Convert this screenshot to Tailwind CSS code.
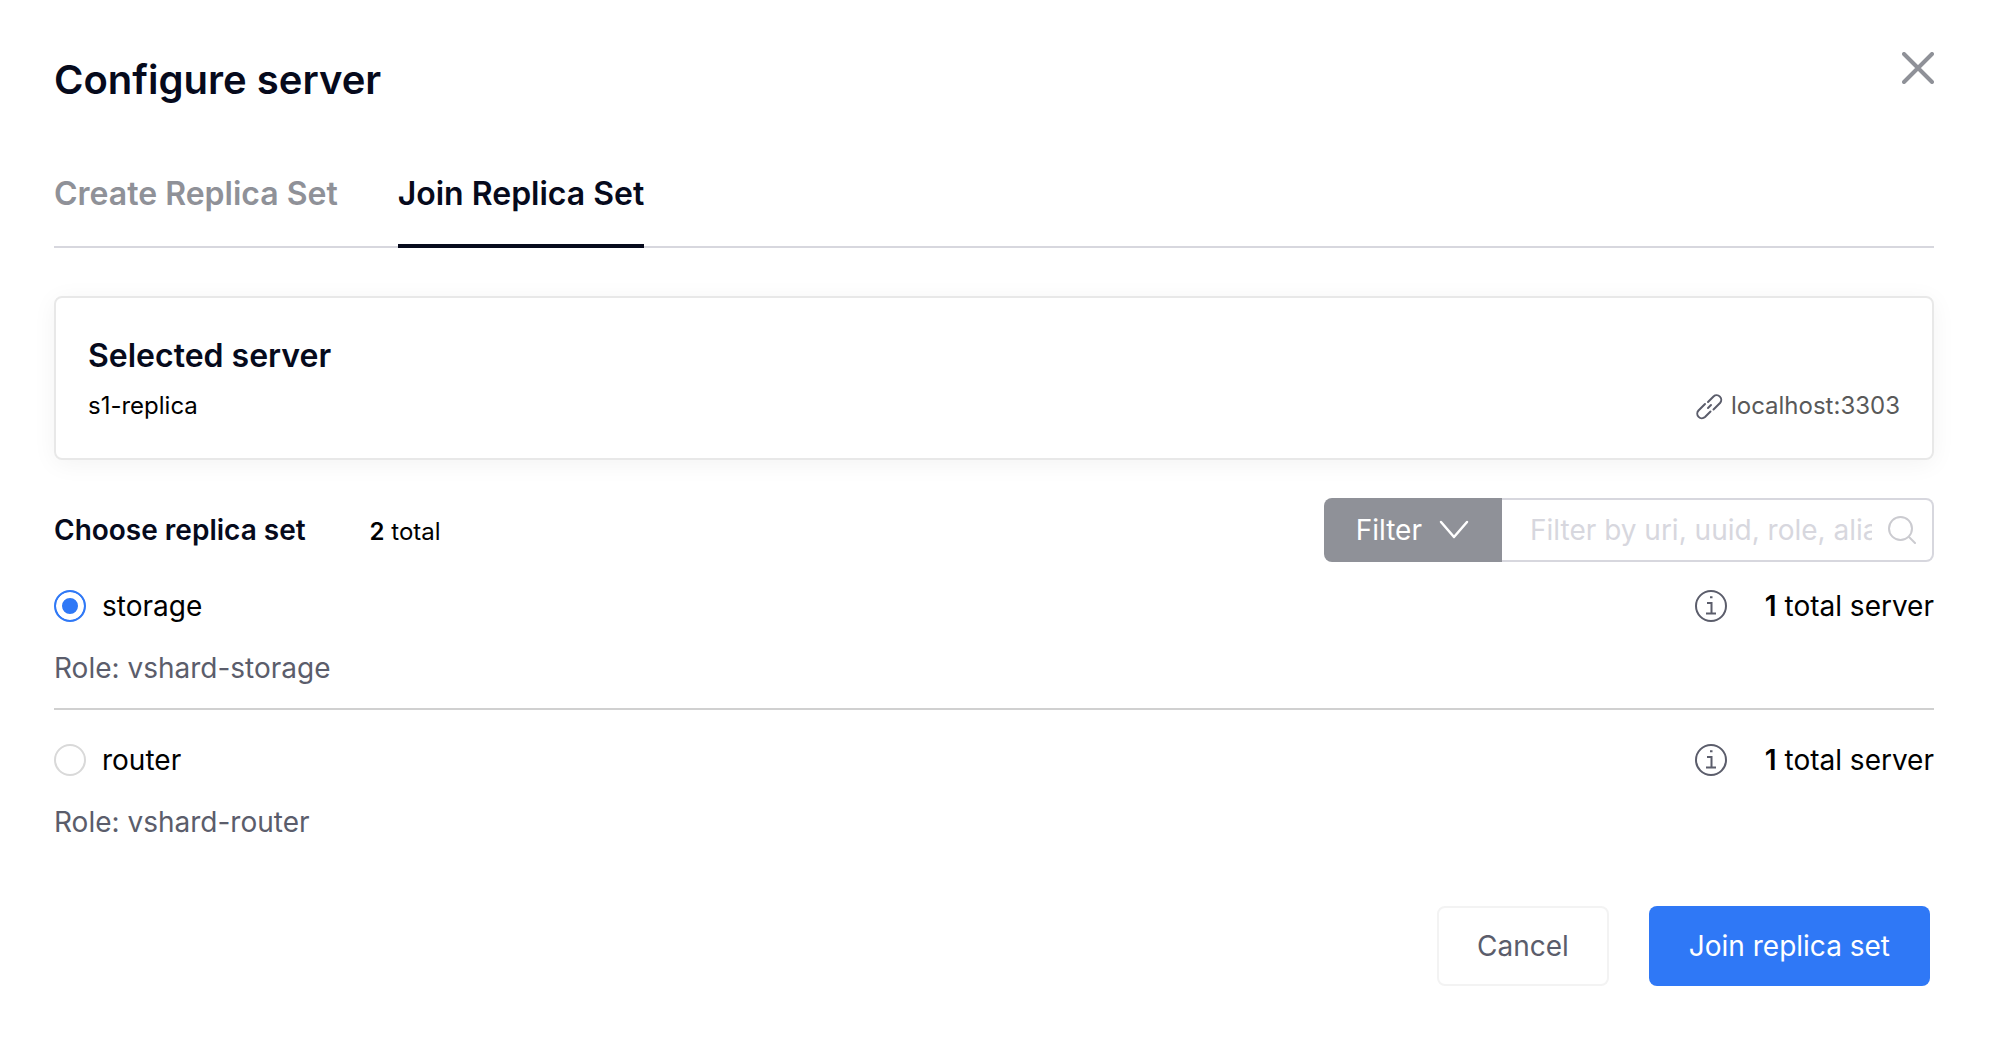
<!DOCTYPE html>
<html lang="en">
<head>
  <meta charset="UTF-8" />
  <meta name="viewport" content="width=device-width, initial-scale=1.0"/>
  <title>Configure server</title>
  <script src="https://cdn.jsdelivr.net/npm/@tailwindcss/browser@4"></script>
</head>
<body class="bg-white font-['Inter',sans-serif] text-[28px] leading-10 text-black">
  <main class="pl-[54px] pr-14 py-14">
    <!-- Header -->
    <header class="flex justify-between items-start">
      <h1 class="text-[40px] leading-12 font-semibold text-[#060a1c]">Configure server</h1>
      <button type="button" aria-label="Close" class="-mt-1 text-[#8f9198]">
        <svg class="size-8" viewBox="0 0 32 32" fill="none" stroke="currentColor" stroke-width="4" stroke-linecap="round">
          <path d="M2 2l28 28M30 2L2 30"/>
        </svg>
      </button>
    </header>

    <!-- Tabs -->
    <nav class="mt-[66px] flex gap-[60px] border-b-2 border-[#d7d7de] text-[32px] leading-12 font-semibold">
      <button type="button" class="-mb-0.5 pb-[26px] border-b-4 border-transparent text-[#8f9198]">Create Replica Set</button>
      <button type="button" class="-mb-0.5 pb-[26px] border-b-4 border-[#060a1c] text-[#060a1c]">Join Replica Set</button>
    </nav>

    <!-- Selected server -->
    <section class="mt-12 px-8 pt-[34px] pb-8 border-2 border-[#e8e8e8] rounded-lg shadow-[0_4px_24px_rgba(0,0,0,0.05)]">
      <h2 class="text-[32px] leading-12 font-semibold text-[#060a1c]">Selected server</h2>
      <div class="mt-1.5 flex justify-between text-2xl leading-10">
        <span>s1-replica</span>
        <span class="flex items-center gap-2 text-[#595959]">
          <svg class="size-7" viewBox="0 0 28 28" fill="none" stroke="#5b5d6b" stroke-width="2" stroke-linecap="round" stroke-linejoin="round">
            <path d="M13 10l5.500-5.500a4.600 4.600 0 0 1 6.500 6.500l-6.500 6.500"/>
            <path d="M10 12l-6.500 6.500a4.600 4.600 0 0 0 6.500 6.500l5.500-5.500"/>
            <path d="M13 16l3-3"/>
          </svg>
          localhost:3303
        </span>
      </div>
    </section>

    <!-- Replica set list header -->
    <div class="mt-[38px] flex justify-between items-center">
      <div class="flex items-baseline gap-16 pt-0.5">
        <h2 class="font-semibold text-[#060a1c]">Choose replica set</h2>
        <span class="text-2xl leading-10"><b class="font-semibold">2</b> total</span>
      </div>
      <div class="flex h-16">
        <button type="button" class="flex items-center gap-4 px-8 rounded-l-lg bg-[#8f9198] text-white">
          Filter
          <svg class="w-8 h-5" viewBox="0 0 32 20" fill="none" stroke="currentColor" stroke-width="2.500" stroke-linecap="round" stroke-linejoin="round">
            <path d="M3 2l13 15L29 2"/>
          </svg>
        </button>
        <div class="flex items-center gap-4 w-[432px] pl-7 pr-4 border-2 border-l-0 border-[#d7d7de] rounded-r-lg">
          <input type="text" aria-label="Filter" placeholder="Filter by uri, uuid, role, alias or labels" class="flex-1 min-w-0 outline-none placeholder:text-[#d7d7de]">
          <svg class="size-7" viewBox="0 0 28 28" fill="none" stroke="#cbcbd0" stroke-width="2" stroke-linecap="round">
            <circle cx="12.500" cy="12.500" r="11.500"/>
            <path d="M21 21l6 6"/>
          </svg>
        </div>
      </div>
    </div>

    <!-- Replica sets -->
    <form>
      <div class="pt-6 pb-5 border-b-2 border-[#d0d0d0]">
        <div class="flex justify-between items-center">
          <label class="flex items-center gap-4">
            <input type="radio" name="replicaset" value="storage" checked class="appearance-none size-8 rounded-full border-2 border-[#d9d9d9] checked:border-[#2f78f6] checked:bg-[#2f78f6] checked:shadow-[inset_0_0_0_6px_white]">
            storage
          </label>
          <div class="flex items-center gap-[38px]">
            <button type="button" aria-label="Info">
              <svg class="size-8" viewBox="0 0 32 32" fill="none" stroke="#5b5d6b" stroke-width="2">
                <circle cx="16" cy="16" r="15"/>
                <path d="M12 13h4.500v10.500M11 23.500h10M15 7.200h2.500"/>
              </svg>
            </button>
            <span><b class="font-semibold">1</b> total server</span>
          </div>
        </div>
        <p class="mt-[22px] text-[#5b5d6b]">Role: vshard-storage</p>
      </div>

      <div class="pt-[30px]">
        <div class="flex justify-between items-center">
          <label class="flex items-center gap-4">
            <input type="radio" name="replicaset" value="router" class="appearance-none size-8 rounded-full border-2 border-[#d9d9d9] checked:border-[#2f78f6] checked:bg-[#2f78f6] checked:shadow-[inset_0_0_0_6px_white]">
            router
          </label>
          <div class="flex items-center gap-[38px]">
            <button type="button" aria-label="Info">
              <svg class="size-8" viewBox="0 0 32 32" fill="none" stroke="#5b5d6b" stroke-width="2">
                <circle cx="16" cy="16" r="15"/>
                <path d="M12 13h4.500v10.500M11 23.500h10M15 7.200h2.500"/>
              </svg>
            </button>
            <span><b class="font-semibold">1</b> total server</span>
          </div>
        </div>
        <p class="mt-[22px] text-[#5b5d6b]">Role: vshard-router</p>
      </div>

      <!-- Actions -->
      <div class="mt-16 pr-1 flex justify-end gap-10">
        <button type="button" class="h-20 px-[38px] border-2 border-[#f3f3f3] rounded-lg text-[#5b5d6b]">Cancel</button>
        <button type="submit" class="h-20 px-10 rounded-lg bg-[#2f78f6] text-white">Join replica set</button>
      </div>
    </form>
  </main>
</body>
</html>
